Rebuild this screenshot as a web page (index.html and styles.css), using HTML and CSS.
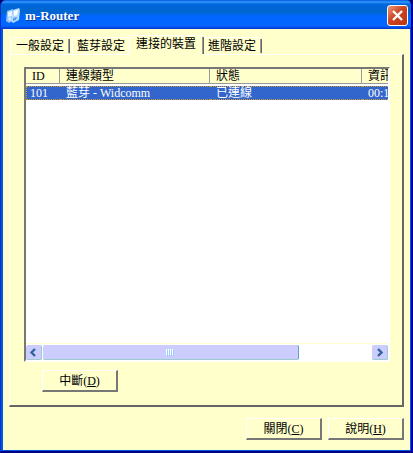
FILE: index.html
```html
<!DOCTYPE html>
<html lang="zh-Hant">

<head>
    <title>m-Router</title>
    <meta charset="utf-8" />
    <link rel="stylesheet" href="styles.css">
</head>

<body>
    <div class="window">
        <header class="titlebar">
            <svg class="app-icon" width="16" height="16" viewBox="0 0 16 16">
                <path d="M2 3 L8 1 L9 12 L4 15 L1 13 Z" fill="#8fc4f8" />
                <path d="M3 4 L7 3 L7 8 L3 9 Z" fill="#e8f6ff" />
                <path d="M8 2 L14 0 L15 2 L14 12 L8 15 L6 13 Z" fill="#b4dcff" />
                <path d="M9 3 L13 2 L12 7 L9 8 Z" fill="#ffffff" />
                <path d="M8 10 L12 9 L11 12 L8 13 Z" fill="#5f9be8" />
                <path d="M3 10 L6 9 L6 12 L4 13 Z" fill="#d4ecff" />
            </svg>
            <h1 class="title">m-Router</h1>
            <button class="close" type="button" aria-label="關閉視窗">
                <svg width="19" height="19" viewBox="0 0 19 19">
                    <path d="M5 5 L14 14 M14 5 L5 14" stroke="#fff" stroke-width="2.4" fill="none" />
                </svg>
            </button>
        </header>

        <main class="content">
            <nav class="tabs" role="tablist">
                <button class="tab" type="button" role="tab">一般設定</button>
                <button class="tab" type="button" role="tab">藍芽設定</button>
                <button class="tab active" type="button" role="tab" aria-selected="true">連接的裝置</button>
                <button class="tab" type="button" role="tab">進階設定</button>
            </nav>

            <section class="panel">
                <div class="list">
                    <div class="list-view">
                        <table class="devices">
                            <thead>
                                <tr>
                                    <th class="col-id">ID</th>
                                    <th class="col-type">連線類型</th>
                                    <th class="col-state">狀態</th>
                                    <th class="col-info">資訊</th>
                                </tr>
                            </thead>
                            <tbody>
                                <tr class="selected">
                                    <td>101</td>
                                    <td>藍芽 - Widcomm</td>
                                    <td>已連線</td>
                                    <td>00:1</td>
                                </tr>
                            </tbody>
                        </table>
                    </div>
                    <div class="scrollbar">
                        <button class="arrow" type="button" aria-label="向左捲動">
                            <svg width="15" height="15" viewBox="0 0 15 15">
                                <path d="M9 4 L5.5 7.5 L9 11" stroke="#31659c" stroke-width="2.4" fill="none" />
                            </svg>
                        </button>
                        <div class="track">
                            <div class="thumb">
                                <svg width="8" height="7" viewBox="0 0 8 7" shape-rendering="crispEdges">
                                    <path d="M0.5 0 V6 M2.5 0 V6 M4.5 0 V6 M6.5 0 V6" stroke="#fff" />
                                    <path d="M1.5 1 V7 M3.5 1 V7 M5.5 1 V7 M7.5 1 V7" stroke="#99ccff" />
                                </svg>
                            </div>
                        </div>
                        <button class="arrow" type="button" aria-label="向右捲動">
                            <svg width="15" height="15" viewBox="0 0 15 15">
                                <path d="M6 4 L9.5 7.5 L6 11" stroke="#31659c" stroke-width="2.4" fill="none" />
                            </svg>
                        </button>
                    </div>
                </div>
                <button class="btn" type="button">中斷(<u>D</u>)</button>
            </section>

            <footer class="actions">
                <button class="btn" type="button">關閉(<u>C</u>)</button>
                <button class="btn" type="button">說明(<u>H</u>)</button>
            </footer>
        </main>
    </div>
</body>

</html>
```

FILE: styles.css
```css
* {
    box-sizing: border-box;
}

body {
    margin: 0;
    background-color: #000066;
    font-family: "Liberation Serif", "Noto Sans CJK TC", serif;
    font-size: 12px;
    line-height: 14px;
    color: #000;
}

button {
    margin: 0;
    padding: 0;
    border: 0;
    background: none;
    font: inherit;
    color: inherit;
}

svg {
    display: block;
}

.window {
    display: flex;
    flex-direction: column;
    min-height: 100vh;
    border: 1px solid #0033cc;
    border-top: 0;
    border-right: 2px solid #0000a0;
    border-bottom: 2px solid #000080;
    border-radius: 6px 6px 0 0;
    background-color: #0055e5;
    overflow: hidden;
}

/* 標題列 */
.titlebar {
    display: flex;
    align-items: center;
    gap: 4px;
    height: 29px;
    padding: 2px 3px 0 4px;
    background: linear-gradient(#0055dd 0, #3399ff 2px, #0066dd 4px, #0066cc 12px, #0066ff 16px, #0066ff 26px, #0033cc 29px);
}

.title {
    flex: 1;
    margin: 0;
    font-size: 13px;
    line-height: 14px;
    color: #fff;
    text-shadow: 1px 1px #003399;
}

.close {
    width: 21px;
    height: 21px;
    border: 1px solid #fff;
    border-radius: 3px;
    background: linear-gradient(135deg, #ee9977, #cc4422 45%, #bb3311);
}

/* 內容 */
.content {
    flex: 1;
    display: flex;
    flex-direction: column;
    margin: 0 1px 1px 2px;
    padding: 6px 6px 10px;
    background-color: #ffffcc;
}

.tabs {
    display: flex;
    align-items: flex-end;
    padding-left: 2px;
}

.tab {
    height: 17px;
    margin-right: 2px;
    padding: 0 6px 0 4px;
    border: 1px solid #fff;
    border-width: 1px 0 0 1px;
    border-radius: 2px 0 0 0;
    position: relative;
    white-space: nowrap;
}

.tab::after {
    content: "";
    position: absolute;
    top: 1px;
    right: 0;
    bottom: 1px;
    width: 1px;
    border-left: 1px solid #999;
    background-color: #666;
}

/* 作用中的分頁蓋住左邊分頁的邊線 */
.tab.active {
    height: 20px;
    margin: 0 -1px -1px -4px;
    padding: 0 8px 4px 6px;
    background-color: #ffffcc;
    z-index: 1;
}

.panel {
    flex: 1;
    display: flex;
    flex-direction: column;
    align-items: flex-start;
    gap: 8px;
    padding: 12px 12px 13px 14px;
    border: 1px solid #fff;
    border-right: 2px solid #666;
    border-bottom: 2px solid #666;
}

.list {
    flex: 1;
    display: flex;
    flex-direction: column;
    width: 100%;
    border: 2px solid #fff;
    border-top-color: #777;
    border-left-color: #777;
    background-color: #fff;
}

/* 寬度超出的欄位由捲軸顯示 */
.list-view {
    flex: 1;
    width: 100%;
    overflow: hidden;
}

.devices {
    table-layout: fixed;
    width: 436px;
    border-collapse: separate;
    border-spacing: 0;
}

.devices th,
.devices td {
    height: 14px;
    padding: 0 6px;
    font-weight: normal;
    line-height: 14px;
    text-align: left;
    white-space: nowrap;
}

.devices th {
    height: 15px;
    border-right: 1px solid #999;
    border-bottom: 1px solid #999;
    background-color: #ffffcc;
}

.devices thead::after {
    content: "";
    display: block;
    height: 2px;
}

.devices .selected td {
    border: 1px dotted #cc9933;
    border-width: 1px 0;
    background-color: #3366cc;
    line-height: 12px;
    color: #fff;
}

.devices .selected td:first-child {
    padding-left: 3px;
    border-left-width: 1px;
}

.col-id {
    width: 34px;
}

.col-type {
    width: 150px;
}

.col-state {
    width: 152px;
}

.col-info {
    width: 100px;
}

/* 水平捲軸 */
.scrollbar {
    display: flex;
    gap: 1px;
    height: 17px;
    padding: 1px 0;
    border-top: 1px solid #ffffcc;
}

.arrow {
    width: 16px;
    height: 15px;
    border-right: 1px solid #99cccc;
    border-bottom: 1px solid #99cccc;
    border-radius: 2px;
    background-color: #ccccff;
}

.track {
    flex: 1;
}

.thumb {
    display: flex;
    align-items: center;
    justify-content: center;
    width: 78%;
    height: 15px;
    border-right: 1px solid #6699cc;
    border-bottom: 1px solid #99cccc;
    border-radius: 2px;
    background-color: #ccccff;
}

/* 按鈕 */
.btn {
    width: 76px;
    height: 22px;
    border: 1px solid #fff;
    border-right: 2px solid #777;
    border-bottom: 2px solid #777;
}

.panel .btn {
    margin-left: 18px;
}

.actions {
    display: flex;
    justify-content: flex-end;
    gap: 6px;
    padding-top: 11px;
}
```
